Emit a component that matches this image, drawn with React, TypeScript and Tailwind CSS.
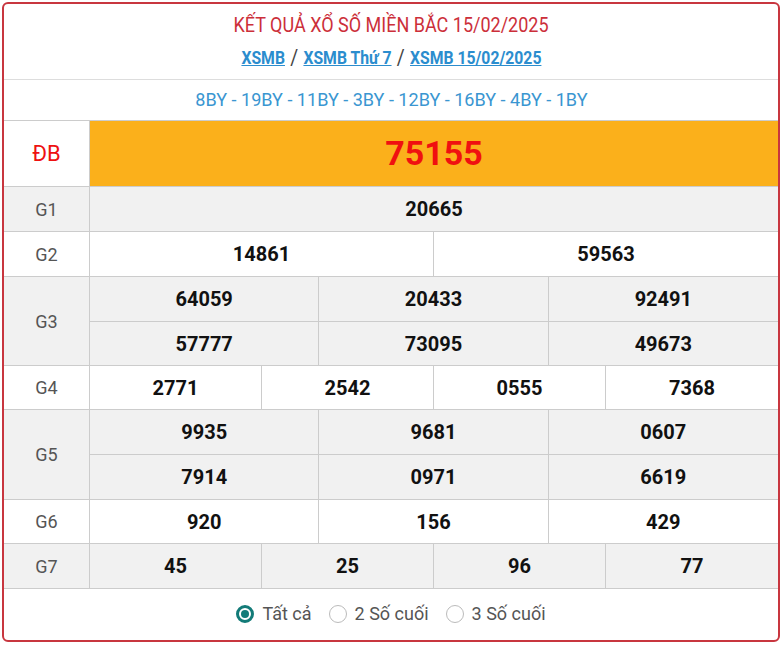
import React from "react";

function Label({ children, red }: { children: React.ReactNode; red?: boolean }) {
  return (
    <div
      className={`w-[86px] shrink-0 border-r border-[#cccccc] flex items-center justify-center ${
        red ? "text-[22px] text-[#ee1111]" : "text-[18px] text-[#555555]"
      }`}
    >
      {children}
    </div>
  );
}

function Cells({ nums, cols, h }: { nums: string[]; cols: 1 | 2 | 3 | 4; h: 43 | 44 }) {
  const gc =
    cols === 1 ? "grid-cols-1" : cols === 2 ? "grid-cols-2" : cols === 3 ? "grid-cols-3" : "grid-cols-4";
  return (
    <div className={`grid ${gc} ${h === 43 ? "h-[43px]" : "h-[44px]"}`}>
      {nums.map((n, i) => (
        <div
          key={i}
          className={`flex items-center justify-center text-[20px] font-bold text-[#111111] ${
            i < nums.length - 1 ? "border-r border-[#cccccc]" : ""
          }`}
        >
          {n}
        </div>
      ))}
    </div>
  );
}

function Row({
  label,
  rows,
  cols,
  heights,
  gray,
}: {
  label: string;
  rows: string[][];
  cols: 1 | 2 | 3 | 4;
  heights: (43 | 44)[];
  gray?: boolean;
}) {
  return (
    <div className={`flex border-t border-[#cccccc] ${gray ? "bg-[#f1f1f1]" : "bg-white"}`}>
      <Label>{label}</Label>
      <div className="flex-1 flex flex-col">
        {rows.map((r, i) => (
          <div key={i} className={i > 0 ? "border-t border-[#cccccc]" : ""}>
            <Cells nums={r} cols={cols} h={heights[i]} />
          </div>
        ))}
      </div>
    </div>
  );
}

function Radio({ checked, label }: { checked?: boolean; label: string }) {
  return (
    <div className="flex items-center gap-[8px]">
      {checked ? (
        <span className="w-[18px] h-[18px] rounded-full border-[3px] border-[#137b78] flex items-center justify-center bg-white">
          <span className="w-[8px] h-[8px] rounded-full bg-[#137b78]" />
        </span>
      ) : (
        <span className="w-[18px] h-[18px] rounded-full border border-[#bbbbbb] bg-white" />
      )}
      <span className="text-[18px] text-[#555555]">{label}</span>
    </div>
  );
}

export default function App() {
  return (
    <div className="bg-white w-[783px] h-[646px] p-[2px]" style={{ fontFamily: "Roboto, sans-serif" }}>
      <div className="w-[778px] h-[640px] border-2 border-[#c8363f] rounded-[6px] overflow-hidden flex flex-col">
        <div className="h-[76px] flex flex-col items-center pt-[8px] border-b border-[#dddddd]">
          <div className="text-[20px] text-[#cc2f3a] leading-[26px] scale-x-[0.9] whitespace-nowrap">
            KẾT QUẢ XỔ SỐ MIỀN BẮC 15/02/2025
          </div>
          <div className="mt-[8px] text-[18px] font-bold leading-[24px] flex items-center gap-[6px] scale-x-[0.875] whitespace-nowrap">
            <span className="text-[#2b8dce] underline">XSMB</span>
            <span className="text-[#444444] text-[22px] font-normal">/</span>
            <span className="text-[#2b8dce] underline">XSMB Thứ 7</span>
            <span className="text-[#444444] text-[22px] font-normal">/</span>
            <span className="text-[#2b8dce] underline">XSMB 15/02/2025</span>
          </div>
        </div>
        <div className="h-[40px] flex items-center justify-center">
          <span className="text-[19px] text-[#3a96d1] scale-x-[0.95] whitespace-nowrap">
            8BY - 19BY - 11BY - 3BY - 12BY - 16BY - 4BY - 1BY
          </span>
        </div>
        <div className="flex border-t border-[#cccccc] h-[66px]">
          <Label red>ĐB</Label>
          <div className="flex-1 bg-[#fbb01b] flex items-center justify-center text-[34px] font-bold text-[#f01010]">
            75155
          </div>
        </div>
        <Row label="G1" rows={[["20665"]]} cols={1} heights={[44]} gray />
        <Row label="G2" rows={[["14861", "59563"]]} cols={2} heights={[44]} />
        <Row
          label="G3"
          rows={[
            ["64059", "20433", "92491"],
            ["57777", "73095", "49673"],
          ]}
          cols={3}
          heights={[44, 43]}
          gray
        />
        <Row label="G4" rows={[["2771", "2542", "0555", "7368"]]} cols={4} heights={[43]} />
        <Row
          label="G5"
          rows={[
            ["9935", "9681", "0607"],
            ["7914", "0971", "6619"],
          ]}
          cols={3}
          heights={[44, 44]}
          gray
        />
        <Row label="G6" rows={[["920", "156", "429"]]} cols={3} heights={[43]} />
        <Row label="G7" rows={[["45", "25", "96", "77"]]} cols={4} heights={[44]} gray />
        <div className="flex-1 border-t border-[#cccccc] flex items-center justify-center gap-[17px] pb-[2px]">
          <Radio checked label="Tất cả" />
          <Radio label="2 Số cuối" />
          <Radio label="3 Số cuối" />
        </div>
      </div>
    </div>
  );
}
